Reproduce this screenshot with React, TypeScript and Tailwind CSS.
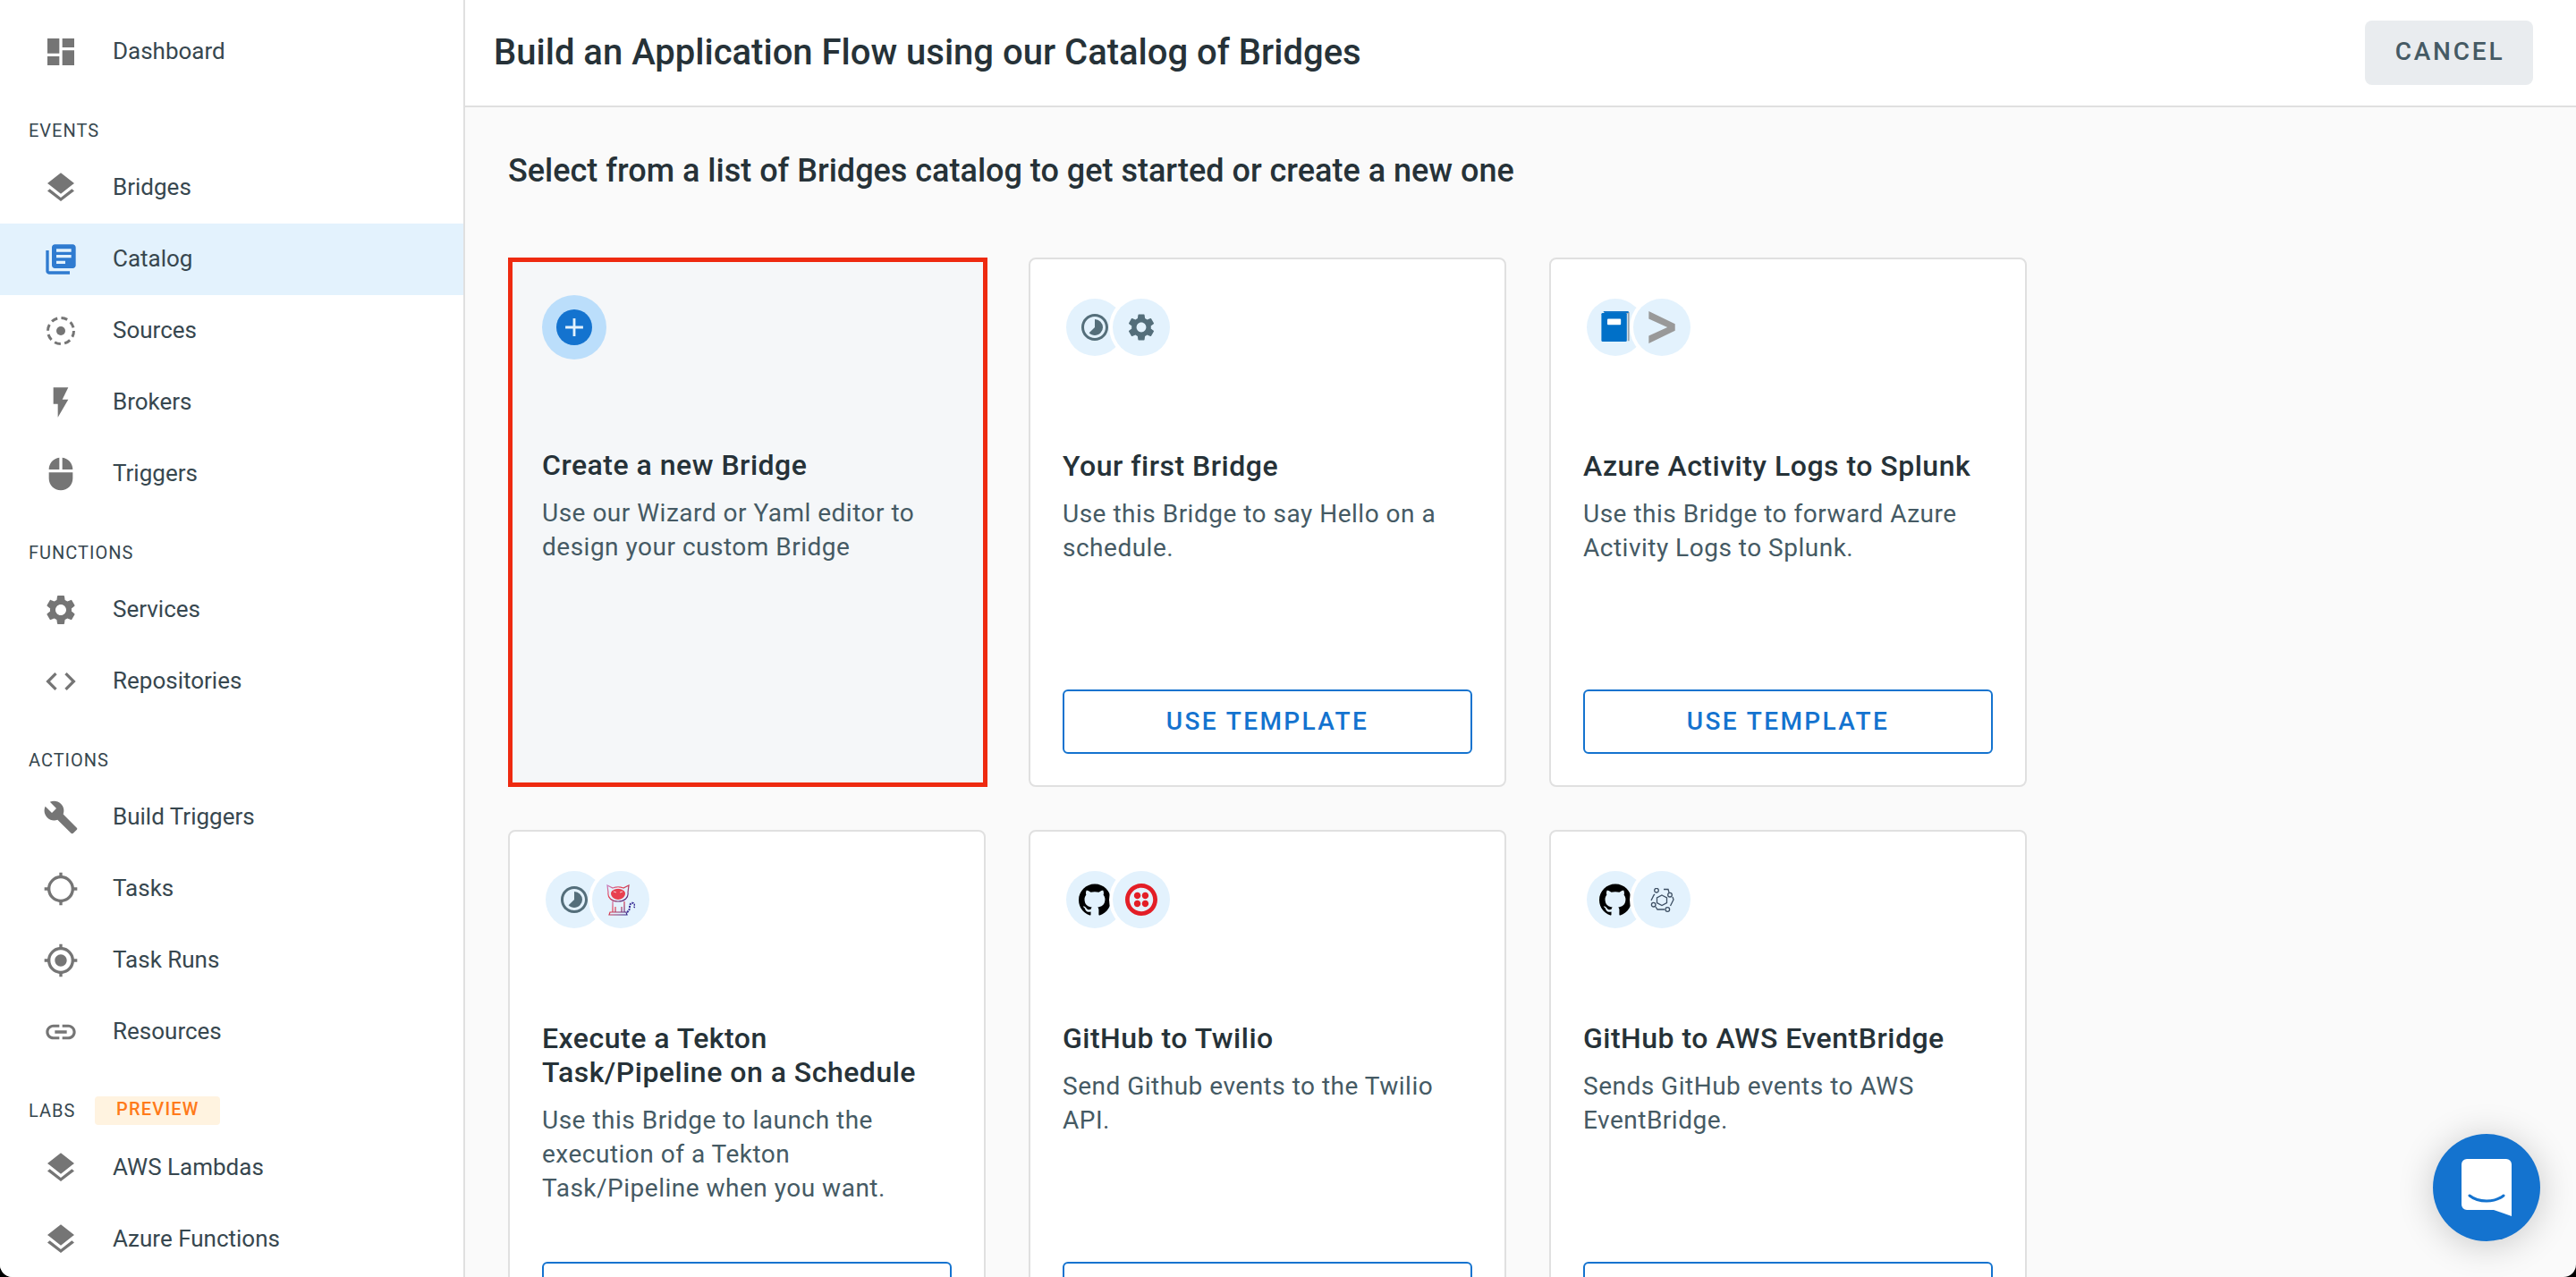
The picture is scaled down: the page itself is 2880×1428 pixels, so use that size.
import type { ReactNode } from "react";
import {
  MdDashboard,
  MdLayers,
  MdLibraryBooks,
  MdFlashOn,
  MdMouse,
  MdSettings,
  MdCode,
  MdBuild,
  MdGpsNotFixed,
  MdGpsFixed,
  MdLink,
  MdTimelapse,
  MdAdd,
} from "react-icons/md";
import { SiGithub, SiTwilio } from "react-icons/si";

const SourcesIcon = () => (
  <svg viewBox="0 0 34 34" className="w-[34px] h-[34px]" fill="none">
    <circle cx="17" cy="17" r="14.5" stroke="#757575" strokeWidth="3" strokeDasharray="7 4.4" />
    <circle cx="17" cy="17" r="5" fill="#757575" />
  </svg>
);

const BookIcon = () => (
  <svg viewBox="0 0 34 38" className="w-[33px] h-[36px]">
    <path d="M3 1h30v34h-2V3H3z" fill="#9aa5ad" />
    <path d="M2 0h30v2H4z" fill="#0f74c8" />
    <rect x="0" y="2" width="30" height="34" rx="1.5" fill="#0070c8" />
    <rect x="7" y="9" width="16" height="7" rx="1" fill="#ffffff" />
  </svg>
);

const SplunkIcon = () => (
  <svg viewBox="0 0 32 38" className="w-[31px] h-[36px]">
    <path d="M0 0l31 15v8L0 38v-9l22-10L0 9z" fill="#999999" />
  </svg>
);

const TektonIcon = () => (
  <svg viewBox="0 0 32 35" className="w-[32px] h-[35px]" fill="none" strokeWidth="1">
    <defs>
      <linearGradient id="tekton" x1="0" y1="0" x2="1" y2="1">
        <stop offset="0" stopColor="#c77dc0" />
        <stop offset="0.4" stopColor="#e8404f" />
        <stop offset="1" stopColor="#2d2a8e" />
      </linearGradient>
    </defs>
    <path
      d="M1 1l6 3c4-1.500 8-1.500 12 0l6-3-1 8c1 6-4 10-11 10S1 15 2 9z"
      stroke="url(#tekton)"
      strokeWidth="1.2"
    />
    <path d="M5 10c0-3 4-5 8-5s8 2 8 5c0 4-4 7-8 7s-8-3-8-7z" fill="#e8404f" />
    <path d="M13 3v2M8 8l3 1M18 8l-3 1" stroke="#f6c8cc" />
    <path
      d="M7 19v12M20 19v12M3 34l1-3h18l1 3zM10 25v6M17 25v6"
      stroke="url(#tekton)"
      strokeWidth="1.2"
    />
    <path d="M23 31c2-1 3-3 3-6s2-5 4-4 2 3 1 5" stroke="#3a2f96" strokeWidth="2" strokeDasharray="2 1" />
  </svg>
);

const EventBridgeIcon = () => (
  <svg viewBox="0 0 27 27" className="w-[27px] h-[27px]" fill="none" stroke="#3d4f63" strokeWidth="1.3">
    <path d="M13 8l5.500 3v5.500L13 19.500l-5.500-3V11z" />
    <circle cx="7" cy="2.700" r="2.300" />
    <circle cx="22" cy="7.700" r="2.300" />
    <circle cx="3.700" cy="18.700" r="2.300" />
    <circle cx="19.300" cy="24" r="2.300" />
    <path d="M15 1.500h5l1 3.500M1 14l3-6 1-1M25 10l1 3-3.500 7M6 21l2 3h8" />
  </svg>
);

const navSections: { label?: ReactNode; items: { name: string; icon: ReactNode; active?: boolean }[] }[] = [
  { items: [{ name: "Dashboard", icon: <MdDashboard size={40} /> }] },
  {
    label: "EVENTS",
    items: [
      { name: "Bridges", icon: <MdLayers size={40} /> },
      { name: "Catalog", icon: <MdLibraryBooks size={40} />, active: true },
      { name: "Sources", icon: <SourcesIcon /> },
      { name: "Brokers", icon: <MdFlashOn size={40} /> },
      { name: "Triggers", icon: <MdMouse size={40} /> },
    ],
  },
  {
    label: "FUNCTIONS",
    items: [
      { name: "Services", icon: <MdSettings size={40} /> },
      { name: "Repositories", icon: <MdCode size={40} /> },
    ],
  },
  {
    label: "ACTIONS",
    items: [
      { name: "Build Triggers", icon: <MdBuild size={40} /> },
      { name: "Tasks", icon: <MdGpsNotFixed size={40} /> },
      { name: "Task Runs", icon: <MdGpsFixed size={40} /> },
      { name: "Resources", icon: <MdLink size={40} /> },
    ],
  },
  {
    label: (
      <>
        LABS
        <span className="ml-[22px] w-[140px] h-8 pb-1 rounded bg-[#fff3e0] text-[#ff7a1a] font-medium tracking-[1.2px] flex items-center justify-center">
          PREVIEW
        </span>
      </>
    ),
    items: [
      { name: "AWS Lambdas", icon: <MdLayers size={40} /> },
      { name: "Azure Functions", icon: <MdLayers size={40} /> },
    ],
  },
];

const slate = "text-[#546e7a]";

const cards: { title: string; desc: string; left: ReactNode; right: ReactNode }[] = [
  {
    title: "Your first Bridge",
    desc: "Use this Bridge to say Hello on a schedule.",
    left: <MdTimelapse size={36} className={slate} />,
    right: <MdSettings size={36} className={slate} />,
  },
  {
    title: "Azure Activity Logs to Splunk",
    desc: "Use this Bridge to forward Azure Activity Logs to Splunk.",
    left: <BookIcon />,
    right: <SplunkIcon />,
  },
  {
    title: "Execute a Tekton Task/Pipeline on a Schedule",
    desc: "Use this Bridge to launch the execution of a Tekton Task/Pipeline when you want.",
    left: <MdTimelapse size={36} className={slate} />,
    right: <TektonIcon />,
  },
  {
    title: "GitHub to Twilio",
    desc: "Send Github events to the Twilio API.",
    left: <SiGithub size={36} className="text-black" />,
    right: <SiTwilio size={36} className="text-[#e31e26]" />,
  },
  {
    title: "GitHub to AWS EventBridge",
    desc: "Sends GitHub events to AWS EventBridge.",
    left: <SiGithub size={36} className="text-black" />,
    right: <EventBridgeIcon />,
  },
];

const Sidebar = () => (
  <aside className="w-[520px] shrink-0 h-full bg-white border-r-2 border-[#e0e0e0] pt-[18px] overflow-hidden">
    {navSections.map((section, i) => (
      <div key={i}>
        {section.label && (
          <div className="h-[72px] pl-8 pt-[36px] flex items-start">
            <div className="h-6 flex items-center text-[20px] tracking-[1px] text-[#37474f]">{section.label}</div>
          </div>
        )}
        {section.items.map((item) => (
          <div
            key={item.name}
            className={`h-20 flex items-center ${item.active ? "bg-[#e3f2fd]" : ""}`}
          >
            <div
              className={`w-[128px] pl-2 flex justify-center shrink-0 ${
                item.active ? "text-[#2f7bd0]" : "text-[#757575]"
              }`}
            >
              {item.icon}
            </div>
            <span className="-ml-0.5 pb-0.5 text-[26px] text-[#37474f]">{item.name}</span>
          </div>
        ))}
      </div>
    ))}
  </aside>
);

const IconPair = ({ left, right }: { left: ReactNode; right: ReactNode }) => (
  <div className="flex h-[64px] ml-1 mt-1.5">
    <div className="w-16 h-16 rounded-full bg-[#e3f2fd] flex items-center justify-center">{left}</div>
    <div className="w-[72px] h-[72px] -mt-1 -ml-4 rounded-full bg-white flex items-center justify-center shrink-0">
      <div className="w-16 h-16 rounded-full bg-[#e3f2fd] flex items-center justify-center">{right}</div>
    </div>
  </div>
);

const cardTitle = "text-[32px] leading-[38px] font-medium text-[#263238] tracking-[0.5px]";
const cardDesc = "mt-4 text-[28px] leading-[38px] text-[#455a64] tracking-[0.5px]";

const TemplateCard = ({ title, desc, left, right }: (typeof cards)[number]) => (
  <div className="h-[592px] rounded-lg border-2 border-[#e0e0e0] bg-white pt-[38px] px-9 pb-[35px] flex flex-col">
    <IconPair left={left} right={right} />
    <h3 className={`${cardTitle} mt-[104px]`}>{title}</h3>
    <p className={cardDesc}>{desc}</p>
    <button className="mt-auto h-[72px] shrink-0 rounded-md border-2 border-[#1473cf] text-[#1473cf] text-[28px] font-medium tracking-[2.4px]">
      USE TEMPLATE
    </button>
  </div>
);

export default function App() {
  return (
    <div className="w-full h-screen bg-black overflow-hidden font-['Roboto',sans-serif]">
      <div className="h-full flex overflow-hidden rounded-b-[14px] relative bg-[#fafafa]">
        <Sidebar />
        <main className="flex-1 min-w-0 flex flex-col">
          <header className="h-[120px] shrink-0 bg-white border-b-2 border-[#e0e0e0] pl-8 pr-12 flex items-center justify-between">
            <h1 className="text-[40px] font-medium text-[#263238]">
              Build an Application Flow using our Catalog of Bridges
            </h1>
            <button className="w-[188px] h-[72px] pb-0.5 pl-0.5 rounded-lg bg-[#e9ecef] text-[#455a64] text-[28px] font-medium tracking-[2.8px]">
              CANCEL
            </button>
          </header>
          <section className="pl-12 pt-[49px]">
            <h2 className="text-[36px] leading-[44px] font-medium text-[#263238]">
              Select from a list of Bridges catalog to get started or create a new one
            </h2>
            <div className="mt-[75px] grid grid-cols-[534px_534px_534px] gap-x-12 gap-y-12">
              <div className="h-[592px] -mr-0.5 border-[5px] border-[#ee2a10] bg-[#f5f7f9] pt-[37px] px-[33px]">
                <div className="w-[72px] h-[72px] rounded-full bg-[#bbdefb] flex items-center justify-center">
                  <div className="w-10 h-10 rounded-full bg-[#1473cf] flex items-center justify-center">
                    <MdAdd size={34} className="text-[#e3f2fd]" />
                  </div>
                </div>
                <h3 className={`${cardTitle} mt-[99px]`}>Create a new Bridge</h3>
                <p className={cardDesc}>Use our Wizard or Yaml editor to design your custom Bridge</p>
              </div>
              {cards.map((card) => (
                <TemplateCard key={card.title} {...card} />
              ))}
            </div>
          </section>
        </main>
        <button className="absolute right-10 bottom-10 w-[120px] h-[120px] rounded-full bg-[#1473cf] shadow-[0_4px_40px_rgba(0,0,0,0.2)] flex items-center justify-center">
          <svg viewBox="0 0 56 64" className="w-14 h-16">
            <path
              d="M6 0h44a6 6 0 0 1 6 6v58l-20-7H6a6 6 0 0 1-6-6V6a6 6 0 0 1 6-6z"
              fill="#ffffff"
            />
            <path d="M9 41c10 8 28 8 38 0" fill="none" stroke="#1473cf" strokeWidth="3" strokeLinecap="round" />
          </svg>
        </button>
      </div>
    </div>
  );
}
